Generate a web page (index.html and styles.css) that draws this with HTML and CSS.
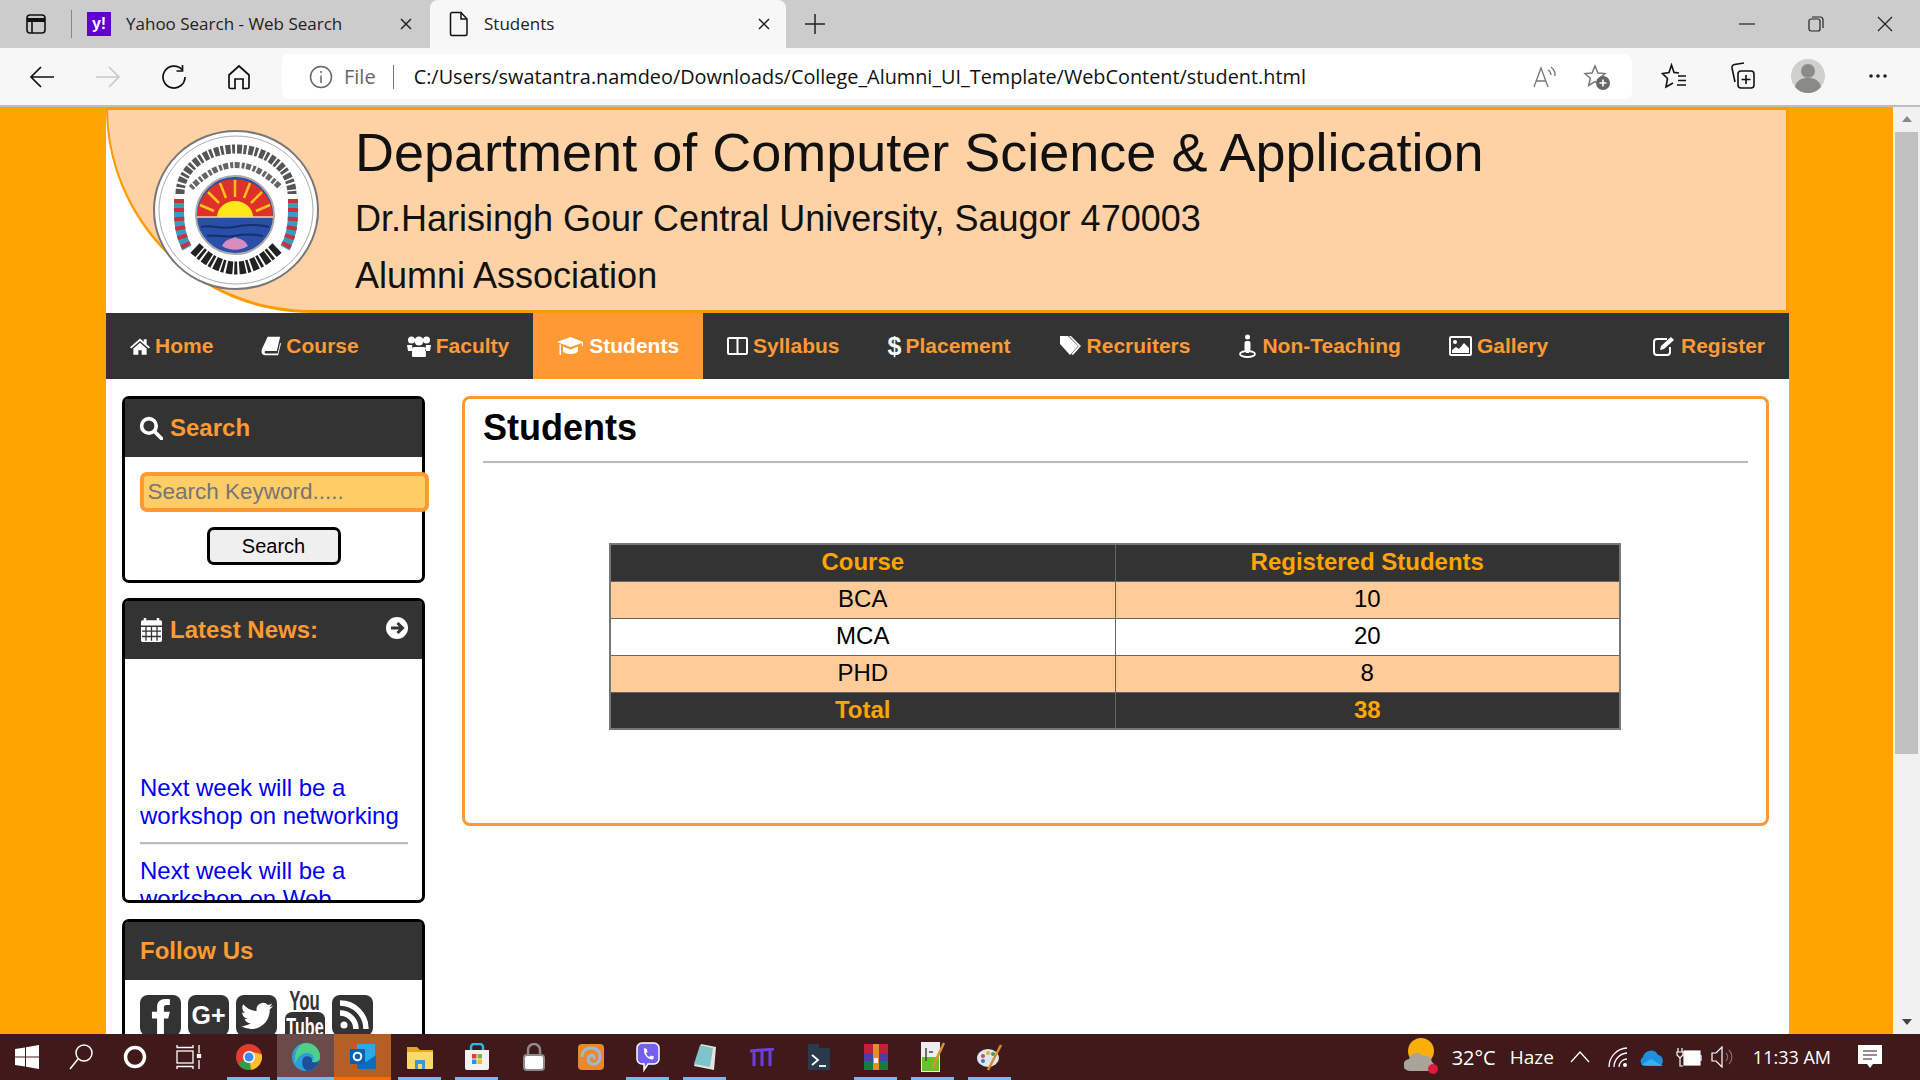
FILE: index.html
```html
<!DOCTYPE html>
<html lang="en">
<head>
    <meta charset="UTF-8">
    <title>Students</title>
    <link rel="stylesheet" href="styles.css">
</head>
<body>
    <!-- browser tabs -->
    <div class="tabbar">
        <svg class="tab-panel-icon" width="22" height="22" viewBox="0 0 22 22" fill="none" stroke="#111" stroke-width="1.6"><rect x="2" y="2" width="18" height="18" rx="3"/><path d="M2 7h18" stroke-width="4"/><path d="M7 8v12"/></svg>
        <div class="tab-sep"></div>
        <div class="tab">
            <div class="yahoo-icon">y!</div>
            <span class="tab-title">Yahoo Search - Web Search</span>
            <svg class="tab-close" width="14" height="14" viewBox="0 0 14 14" stroke="#222" stroke-width="1.5"><path d="M2 2l10 10M12 2L2 12"/></svg>
        </div>
        <div class="tab tab-active">
            <svg width="20" height="26" viewBox="0 0 20 26" fill="none" stroke="#111" stroke-width="1.5"><path d="M3 1.5h9l6 6.5v15a1.5 1.5 0 0 1-1.5 1.5h-13.500A1.500 1.500 0 0 1 1.500 23V3A1.500 1.500 0 0 1 3 1.500z"/><path d="M12 1.500V8h6"/></svg>
            <span class="tab-title">Students</span>
            <svg class="tab-close" width="14" height="14" viewBox="0 0 14 14" stroke="#222" stroke-width="1.5"><path d="M2 2l10 10M12 2L2 12"/></svg>
        </div>
        <svg class="tab-new" width="22" height="22" viewBox="0 0 22 22" stroke="#222" stroke-width="1.500"><path d="M11 1v20M1 11h20"/></svg>
        <div class="window-buttons">
            <svg width="16" height="16" viewBox="0 0 16 16" stroke="#222" stroke-width="1.200"><path d="M0 8h16"/></svg>
            <svg width="16" height="16" viewBox="0 0 16 16" fill="none" stroke="#222" stroke-width="1.200"><rect x="1" y="3" width="11" height="12" rx="2"/><path d="M4 1h8a3 3 0 0 1 3 3v8"/></svg>
            <svg width="16" height="16" viewBox="0 0 16 16" stroke="#222" stroke-width="1.200"><path d="M1 1l14 14M15 1L1 15"/></svg>
        </div>
    </div>

    <!-- address bar -->
    <div class="toolbar">
        <div class="nav-buttons">
            <svg width="26" height="24" viewBox="0 0 26 24" fill="none" stroke="#111" stroke-width="1.700"><path d="M25 12H2M12 2L2 12l10 10"/></svg>
            <svg width="26" height="24" viewBox="0 0 26 24" fill="none" stroke="#c9c9c9" stroke-width="1.700"><path d="M1 12h23M14 2l10 10-10 10"/></svg>
            <svg width="26" height="26" viewBox="0 0 26 26" fill="none" stroke="#111" stroke-width="1.700"><path d="M21 5.500A11 11 0 1 0 24 13"/><path d="M21.500 1v6h-6"/></svg>
            <svg width="24" height="26" viewBox="0 0 24 26" fill="none" stroke="#111" stroke-width="1.700"><path d="M2 11l10-9 10 9v12a1.500 1.500 0 0 1-1.500 1.500H16V15H8v9.500H3.500A1.500 1.500 0 0 1 2 23z"/></svg>
        </div>
        <div class="address">
            <svg width="24" height="24" viewBox="0 0 24 24" fill="none" stroke="#666" stroke-width="1.500"><circle cx="12" cy="12" r="10.500"/><path d="M12 10.500V18M12 6v2"/></svg>
            <span class="address-file">File</span>
            <span class="address-sep"></span>
            <span class="address-url">C:/Users/swatantra.namdeo/Downloads/College_Alumni_UI_Template/WebContent/student.html</span>
            <svg class="address-read" width="26" height="24" viewBox="0 0 26 24" fill="none" stroke="#777" stroke-width="1.300"><path d="M2 22L9 3l7 19M4.500 16h9"/><path d="M16 5a6 6 0 0 1 3 5M19 2a10 10 0 0 1 4 9"/></svg>
            <svg class="address-star" width="28" height="28" viewBox="0 0 28 28"><path d="M12 3l3 7 7 .6-5.300 4.700 1.600 7.200L12 18.700 5.700 22.500l1.600-7.200L2 10.600 9 10z" fill="none" stroke="#777" stroke-width="1.500"/><circle cx="20" cy="20" r="7" fill="#666"/><path d="M20 16.500v7M16.500 20h7" stroke="#fff" stroke-width="1.600"/></svg>
        </div>
        <div class="toolbar-right">
            <svg width="26" height="26" viewBox="0 0 26 26" fill="none" stroke="#111" stroke-width="1.600"><path d="M18 10l-5-.6L10.500 2 8 9.500 1.500 10.500l5 5L5 24l7-4"/><path d="M17 13h8M17 17.500h8M16 22h9"/></svg>
            <svg width="26" height="28" viewBox="0 0 26 28" fill="none" stroke="#111" stroke-width="1.600"><path d="M5 20L2 6a3 3 0 0 1 2.500-3.500L14 1"/><rect x="8" y="9" width="16" height="17" rx="3"/><path d="M16 13v9M11.500 17.500h9"/></svg>
            <svg width="34" height="34" viewBox="0 0 34 34"><circle cx="17" cy="17" r="17" fill="#cfcfcc"/><circle cx="17" cy="12" r="7" fill="#8c8a87"/><path d="M4 28c2-8 8-9 13-9s11 1 13 9a17 17 0 0 1-26 0z" fill="#8c8a87"/></svg>
            <svg width="20" height="6" viewBox="0 0 20 6" fill="#222"><circle cx="3" cy="3" r="1.800"/><circle cx="10" cy="3" r="1.800"/><circle cx="17" cy="3" r="1.800"/></svg>
        </div>
    </div>

    <!-- the page itself -->
    <div class="viewport">
        <div class="wrapper">
            <header class="site-header">
                <svg class="logo" viewBox="0 0 166 160">
                    <ellipse cx="83" cy="80" rx="82" ry="79" fill="#fff" stroke="#777" stroke-width="2"/>
                    <ellipse cx="83" cy="80" rx="77" ry="74" fill="none" stroke="#aaa" stroke-width="1"/>
                    <path d="M27 64A56 45 0 0 1 139 64" fill="none" stroke="#555" stroke-width="9" stroke-dasharray="5 1.500 3 2"/>
                    <path d="M38 58Q83 12 128 58" fill="none" stroke="#666" stroke-width="6" stroke-dasharray="3 1.500 5 2"/>
                    <path d="M42 118Q83 158 124 118" fill="none" stroke="#222" stroke-width="13" stroke-dasharray="6 1.500 3 2"/>
                    <path d="M26 69v14c0 14 3 26 8 35" fill="none" stroke="#3a9ac0" stroke-width="10"/>
                    <path d="M26 69v14c0 14 3 26 8 35" fill="none" stroke="#c8323c" stroke-width="10" stroke-dasharray="4 5"/>
                    <path d="M140 69v14c0 14-3 26-8 35" fill="none" stroke="#3a9ac0" stroke-width="10"/>
                    <path d="M140 69v14c0 14-3 26-8 35" fill="none" stroke="#c8323c" stroke-width="10" stroke-dasharray="4 5"/>
                    <circle cx="82" cy="85" r="39" fill="#2a4fa8" stroke="#aaa" stroke-width="2"/>
                    <path d="M44 87a38 38 0 0 1 76 0z" fill="#e0302a"/>
                    <path d="M64 87a18 16 0 0 1 36 0z" fill="#ffe81a"/>
                    <path d="M82 67V50M73 68l-6-15M91 68l6-15M66 73l-11-11M98 73l11-11M61 81l-14-6M103 81l14-6" stroke="#ffc21a" stroke-width="2.500"/>
                    <path d="M44 87h76" stroke="#f4d9a0" stroke-width="1.500"/>
                    <path d="M48 97c10-3 20 3 33 0s22-3 35 0M54 106c9-2 18 2 27 0s18-2 29 0" fill="none" stroke="#16306e" stroke-width="2"/>
                    <path d="M69 116c4-8 8-6 13-9 5 3 9 1 13 9-8 5-18 5-26 0z" fill="#d98ac0"/>
                </svg>
                <div class="site-title">
                    <h1>Department of Computer Science &amp; Application</h1>
                    <p>Dr.Harisingh Gour Central University, Saugor 470003</p>
                    <p>Alumni Association</p>
                </div>
            </header>

            <nav class="main-nav">
                <a class="nav-item">
                    <svg width="20" height="20" viewBox="0 0 24 24" fill="#fff"><path d="M12 3L0 13.500l1.500 1.500L12 6l10.500 9 1.500-1.500-4-3.500V4h-3.500v3zM4 15v7.500h6V17h4v5.500h6V15l-8-7z"/></svg>Home
                </a>
                <a class="nav-item">
                    <svg width="20" height="22" viewBox="0 0 24 24" fill="#fff"><path d="M8 1h15l-4 17H6c-2 0-2.500 3 0 3h14l3-13 1 1-3.500 14H5C1 23 0 20 1 16z"/></svg>Course
                </a>
                <a class="nav-item">
                    <svg width="24" height="24" viewBox="0 0 24 22" fill="#fff"><circle cx="4.500" cy="5" r="3.500"/><circle cx="19.500" cy="5" r="3.500"/><circle cx="12" cy="6" r="4.500"/><path d="M0 10h5l1 6H1zM24 10h-5l-1 6h5zM7 12h10c1.500 0 2 3 2 9a1 1 0 0 1-1 1H6a1 1 0 0 1-1-1c0-6 .5-9 2-9z"/></svg>Faculty
                </a>
                <a class="nav-item nav-active">
                    <svg width="27" height="24" viewBox="0 0 27 22" fill="#fff"><path d="M13.500 2L0 7l13.500 5L25 8v3l1 0V7z"/><path d="M6 11.500V16c0 1.500 3.500 3 7.500 3s7.500-1.500 7.500-3v-4.500l-7.500 3zM2.500 9v11h1.500V9.500z"/></svg>Students
                </a>
                <a class="nav-item">
                    <svg width="21" height="20" viewBox="0 0 21 20" fill="none" stroke="#fff" stroke-width="2"><rect x="1" y="2" width="19" height="16" rx="1"/><path d="M10.500 2v16"/></svg>Syllabus
                </a>
                <a class="nav-item">
                    <span class="dollar">$</span>Placement
                </a>
                <a class="nav-item">
                    <svg width="23" height="22" viewBox="0 0 23 22" fill="#fff"><path d="M1 1h8l10 10-8 9L1 9z"/><path d="M12 1l10 10-8 9-1.500-1 7-8L10 1z"/></svg>Recruiters
                </a>
                <a class="nav-item">
                    <svg width="19" height="24" viewBox="0 0 19 24" fill="#fff"><circle cx="9.500" cy="3" r="2.500"/><rect x="6.500" y="7" width="6" height="10" rx="2"/><rect x="8" y="15" width="3" height="4"/><ellipse cx="9.500" cy="20" rx="7.500" ry="3" fill="none" stroke="#fff" stroke-width="1.800"/></svg>Non-Teaching
                </a>
                <a class="nav-item">
                    <svg width="23" height="20" viewBox="0 0 23 20"><rect x="1" y="1" width="21" height="18" rx="1" fill="none" stroke="#fff" stroke-width="2"/><circle cx="6" cy="6" r="2" fill="#fff"/><path d="M3 17v-3l4-3 3 2 5-6 5 5v5z" fill="#fff"/></svg>Gallery
                </a>
                <a class="nav-item nav-right">
                    <svg width="23" height="20" viewBox="0 0 23 20"><path d="M14 3H4a3 3 0 0 0-3 3v10a3 3 0 0 0 3 3h10a3 3 0 0 0 3-3v-5" fill="none" stroke="#fff" stroke-width="2"/><path d="M8 10L18 1l3 3-10 9-4 1z" fill="#fff"/></svg>Register
                </a>
            </nav>

            <div class="content">
                <aside class="sidebar">
                    <section class="panel panel-search">
                        <h3 class="panel-head">
                            <svg class="search-icon" width="24" height="24" viewBox="0 0 23 23" fill="none" stroke="#fff" stroke-width="3.500"><circle cx="9.500" cy="9.500" r="7"/><path d="M15 15l6.500 6.500" stroke-linecap="round"/></svg>
                            Search
                        </h3>
                        <div class="search-body">
                            <input class="search-input" type="text" placeholder="Search Keyword.....">
                            <button class="search-button">Search</button>
                        </div>
                    </section>

                    <section class="panel panel-news">
                        <h3 class="panel-head">
                            <svg width="23" height="26" viewBox="0 0 23 24" preserveAspectRatio="none"><rect x="1" y="3" width="21" height="20" rx="1.500" fill="#fff"/><path d="M5 1v5M18 1v5" stroke="#fff" stroke-width="2.500"/><path d="M1 8.500h21M2 13h19M2 18h19M6 9v13M11.500 9v13M17 9v13" stroke="#333" stroke-width="1.300"/></svg>
                            Latest News:
                            <svg class="news-arrow" width="22" height="22" viewBox="0 0 22 22"><circle cx="11" cy="11" r="11" fill="#fff"/><path d="M5 11h11M11.500 6l5 5-5 5" fill="none" stroke="#333" stroke-width="3"/></svg>
                        </h3>
                        <div class="news-body">
                            <a class="news-link">Next week will be a workshop on networking</a>
                            <hr class="news-rule">
                            <a class="news-link">Next week will be a workshop on Web Technology</a>
                        </div>
                    </section>

                    <section class="panel panel-follow">
                        <h3 class="panel-head">Follow Us</h3>
                        <div class="social">
                            <div class="social-box"><svg width="44" height="44" viewBox="0 0 24 24" fill="#fff"><path d="M14 13.500h2.500l1-4H14v-2c0-1.030 0-2 2-2h1.500V2.140c-.326-.043-1.557-.14-2.857-.14C11.928 2 10 3.657 10 6.700v2.800H7v4h3V24h4z"/></svg></div>
                            <div class="social-box social-gplus">G+</div>
                            <div class="social-box"><svg width="32" height="32" viewBox="0 0 24 24" fill="#fff"><path d="M23.953 4.570a10 10 0 01-2.825.775 4.958 4.958 0 002.163-2.723c-.951.555-2.005.959-3.127 1.184a4.920 4.920 0 00-8.384 4.482C7.690 8.095 4.067 6.130 1.640 3.162a4.822 4.822 0 00-.666 2.475c0 1.710.870 3.213 2.188 4.096a4.904 4.904 0 01-2.228-.616v.060a4.923 4.923 0 003.946 4.827 4.996 4.996 0 01-2.212.085 4.936 4.936 0 004.604 3.417 9.867 9.867 0 01-6.102 2.105c-.390 0-.779-.023-1.170-.067a13.995 13.995 0 007.557 2.209c9.053 0 13.998-7.496 13.998-13.985 0-.210 0-.420-.015-.630A9.935 9.935 0 0024 4.590z"/></svg></div>
                            <div class="social-youtube">
                                <span class="yt-you">You</span>
                                <span class="yt-tube"><span class="yt-tube-text">Tube</span></span>
                            </div>
                            <div class="social-box"><svg width="40" height="40" viewBox="0 0 40 40" fill="none" stroke="#fff" stroke-width="5.500"><circle cx="11" cy="29" r="3.500" fill="#fff" stroke="none"/><path d="M7 17a16 16 0 0 1 16 16M7 7a26 26 0 0 1 26 26"/></svg></div>
                        </div>
                    </section>
                </aside>

                <main class="main-panel">
                    <h2 class="main-title">Students</h2>
                    <hr class="main-rule">
                    <table class="stats">
                        <thead>
                            <tr><th>Course</th><th>Registered Students</th></tr>
                        </thead>
                        <tbody>
                            <tr><td>BCA</td><td>10</td></tr>
                            <tr class="plain"><td>MCA</td><td>20</td></tr>
                            <tr><td>PHD</td><td>8</td></tr>
                        </tbody>
                        <tfoot>
                            <tr><th>Total</th><th>38</th></tr>
                        </tfoot>
                    </table>
                </main>
            </div>
        </div>

        <div class="scrollbar">
            <div class="scroll-up"></div>
            <div class="scroll-thumb"></div>
            <div class="scroll-down"></div>
        </div>
    </div>

    <!-- windows taskbar -->
    <div class="taskbar">
        <div class="tb-slot"><svg width="24" height="24" viewBox="0 0 24 24" fill="#fff"><path d="M0 4l10-1.500V11.500H0zM11 2.300L24 0v11.500H11zM0 12.500h10v9L0 20zM11 12.500h13V24l-13-2.200z"/></svg></div>
        <div class="tb-slot"><svg width="24" height="26" viewBox="0 0 24 26" fill="none" stroke="#fff" stroke-width="1.500"><circle cx="15" cy="9" r="8"/><path d="M9 15L1 25"/></svg></div>
        <div class="tb-slot"><svg width="24" height="24" viewBox="0 0 24 24" fill="none" stroke="#fff" stroke-width="3.500"><circle cx="12" cy="12" r="9.500"/></svg></div>
        <div class="tb-slot"><svg width="26" height="24" viewBox="0 0 26 24" fill="none" stroke="#fff" stroke-width="1.300"><path d="M1 0v2.500h16V0M1 24v-2.500h16V24"/><rect x="1" y="6" width="16" height="12"/><path d="M23 0v8M23 15v9"/><rect x="21.500" y="9.500" width="3" height="3" fill="#fff"/></svg></div>
        <div class="tb-app tb-first tb-open">
            <svg width="26" height="26" viewBox="0 0 26 26"><circle cx="13" cy="13" r="13" fill="#e33b2e"/><path d="M13 13L2 19.500A13 13 0 0 0 15 25.800z" fill="#2f9e44"/><path d="M13 13l2 12.800A13 13 0 0 0 25.800 10.500L13 7z" fill="#fbc02d"/><circle cx="13" cy="13" r="6" fill="#fff"/><circle cx="13" cy="13" r="4.500" fill="#4285f4"/></svg>
        </div>
        <div class="tb-app tb-open tb-hover">
            <svg width="28" height="28" viewBox="0 0 28 28"><circle cx="14" cy="14" r="14" fill="#2a9fd8"/><path d="M14 0a14 14 0 0 1 14 14c0 4-4 6-8 5 3-3 2-9-5-9-6 0-11 5-11 11C1 12 6 0 14 0z" fill="#4fd08a"/><path d="M12 14c4-2 9 0 8 5 3 1 6 0 7.500-2A14 14 0 0 1 16 28c-5-1-8-9-4-14z" fill="#1e4e9c"/></svg>
        </div>
        <div class="tb-app tb-open tb-active">
            <svg width="28" height="28" viewBox="0 0 28 28"><rect x="8" y="1" width="18" height="25" fill="#29a8ea"/><path d="M8 13l9 6 10-7v13a1 1 0 0 1-1 1H9a1 1 0 0 1-1-1z" fill="#0f6cbd"/><rect x="1" y="6" width="15" height="15" rx="1" fill="#0a5fb0"/><circle cx="8.500" cy="13.500" r="3.800" fill="none" stroke="#fff" stroke-width="2"/></svg>
        </div>
        <div class="tb-app tb-open">
            <svg width="26" height="24" viewBox="0 0 26 24"><path d="M0 2h10l3 3h13v4H0z" fill="#e2a91c"/><rect y="7" width="26" height="17" rx="1" fill="#ffd966"/><path d="M8 24v-9h10v9h-3v-5h-4v5z" fill="#3a96dd"/></svg>
        </div>
        <div class="tb-app tb-open">
            <svg width="26" height="28" viewBox="0 0 26 28"><path d="M7 8V4a3 3 0 0 1 3-3h6a3 3 0 0 1 3 3v4" fill="none" stroke="#29b6e8" stroke-width="2.500"/><path d="M1 7h24v18a2 2 0 0 1-2 2H3a2 2 0 0 1-2-2z" fill="#f2f2f2"/><rect x="8" y="11" width="4.500" height="4.500" fill="#e8412a"/><rect x="13.500" y="11" width="4.500" height="4.500" fill="#7cb82f"/><rect x="8" y="16.500" width="4.500" height="4.500" fill="#1e9be0"/><rect x="13.500" y="16.500" width="4.500" height="4.500" fill="#fbbc09"/></svg>
        </div>
        <div class="tb-app">
            <svg width="22" height="28" viewBox="0 0 22 28"><path d="M5 13V7a6 6 0 0 1 12 0v6" fill="none" stroke="#8e8a88" stroke-width="2.500"/><rect x="1" y="12" width="20" height="15" rx="3" fill="#fff" stroke="#8e8a88" stroke-width="2"/></svg>
        </div>
        <div class="tb-app">
            <svg width="26" height="26" viewBox="0 0 26 26"><rect width="26" height="26" rx="4" fill="#e8892c"/><path d="M13 4c6 0 9 4 9 9s-4 8-8 7-5-6-2-8 5 1 4 3M13 4C7 4 4 8 4 13" fill="none" stroke="#9db8d8" stroke-width="3"/></svg>
        </div>
        <div class="tb-app tb-open">
            <svg width="24" height="30" viewBox="0 0 24 30"><path d="M6 1h12a5 5 0 0 1 5 5v11a5 5 0 0 1-5 5h-6l-4 6v-6H6a5 5 0 0 1-5-5V6a5 5 0 0 1 5-5z" fill="#7360f2" stroke="#fff" stroke-width="1.500"/><path d="M8 6l3 1 .5 3-1.500 1c.5 2 1.500 3 3.500 4l1.500-1.500 3 1-1 3c-4 .5-9-4-9-9z" fill="#fff"/></svg>
        </div>
        <div class="tb-app tb-open">
            <svg width="24" height="28" viewBox="0 0 24 28"><path d="M8 1l15 3-2 23-20-4z" fill="#e8e4d8"/><path d="M7 2l13 3-3 19-16-3z" fill="#7fc4cc"/></svg>
        </div>
        <div class="tb-app">
            <svg width="24" height="18" viewBox="0 0 24 18" fill="none" stroke="#6d3fe0" stroke-width="3"><path d="M0 3l24-2M4 3v15M12 3v15M20 2v16"/></svg>
        </div>
        <div class="tb-app">
            <svg width="22" height="26" viewBox="0 0 22 26"><path d="M0 0h11v4h11v22H0z" fill="#2b3a4a"/><path d="M4 11l6 5-6 5" fill="none" stroke="#fff" stroke-width="1.800"/><path d="M11 22h7" stroke="#fff" stroke-width="1.800"/></svg>
        </div>
        <div class="tb-app tb-open">
            <svg width="24" height="26" viewBox="0 0 24 26"><rect width="24" height="9" fill="#c02040"/><rect y="9" width="24" height="8" fill="#4a40a8"/><rect y="17" width="24" height="9" fill="#1e7a3c"/><rect x="9" width="6" height="26" fill="#e09028"/><rect x="10" y="14" width="4" height="5" fill="#eee"/></svg>
        </div>
        <div class="tb-app tb-open">
            <svg width="24" height="30" viewBox="0 0 24 30"><path d="M0 0h19v30H0z" fill="#eee"/><path d="M1 15h17v14H1z" fill="#66c22a"/><path d="M5 6v13M8 10h4" stroke="#444" stroke-width="1.500"/><path d="M23 1L13 22l-1 4" stroke="#d9952a" stroke-width="2.500" fill="none"/></svg>
        </div>
        <div class="tb-app tb-open">
            <svg width="26" height="28" viewBox="0 0 26 28"><ellipse cx="11" cy="15" rx="11" ry="9" fill="#dce8f0"/><circle cx="6" cy="13" r="2" fill="#d04a4a"/><circle cx="11" cy="10" r="2" fill="#e0b020"/><circle cx="16" cy="11" r="2" fill="#4a9a5a"/><circle cx="6" cy="18" r="2" fill="#4a70c0"/><path d="M24 2L11 27" stroke="#d98a2a" stroke-width="2.500"/></svg>
        </div>

        <div class="tray">
            <svg class="tray-weather" width="34" height="38" viewBox="0 0 34 38"><circle cx="17" cy="13" r="13" fill="#f9ae0a"/><path d="M6 33a6 6 0 0 1-1-12 8 8 0 0 1 14-3 7 7 0 0 1 9 6 5 5 0 0 1-1 9z" fill="#a9a39a"/><circle cx="29" cy="31" r="5" fill="#e01a3c"/></svg>
            <span class="tray-temp">32°C</span>
            <span class="tray-haze">Haze</span>
            <svg class="tray-chevron" width="20" height="12" viewBox="0 0 20 12" fill="none" stroke="#fff" stroke-width="1.300"><path d="M1 11l9-10 9 10"/></svg>
            <svg class="tray-wifi" width="20" height="22" viewBox="0 0 20 22" fill="none" stroke="#fff" stroke-width="1.300"><path d="M1 21A19 19 0 0 1 19 2M6 21A14 14 0 0 1 19 7M11 21a8 8 0 0 1 8-8"/><circle cx="17" cy="19" r="2" fill="#fff" stroke="none"/></svg>
            <svg class="tray-cloud" width="26" height="18" viewBox="0 0 26 18"><path d="M5 18a5 5 0 0 1-1-9 8 8 0 0 1 15-2 6 6 0 0 1 2 11z" fill="#1f8fe0"/><path d="M2 17l10-6 12 7z" fill="#35b0f0"/></svg>
            <svg class="tray-battery" width="26" height="20" viewBox="0 0 26 20" fill="none" stroke="#fff" stroke-width="1.200"><path d="M2 1v4M6 1v4M1 5h6v3l-3 3-3-3zM4 11v8h3"/><rect x="8" y="4" width="16" height="14" fill="#fff"/><path d="M25 8v6"/></svg>
            <svg class="tray-volume" width="24" height="22" viewBox="0 0 24 22" fill="none" stroke="#fff" stroke-width="1.200"><path d="M1 7h4l6-6v20l-6-6H1z"/><path d="M15 7a6 6 0 0 1 0 8M18 4a10 10 0 0 1 0 14" stroke="#8a7070"/></svg>
            <span class="tray-clock">11:33 AM</span>
            <svg class="tray-notify" width="24" height="24" viewBox="0 0 24 24"><path d="M0 0h24v19h-9l-3 4-3-4H0z" fill="#fff"/><path d="M5 6h14M5 10h14M5 14h9" stroke="#401a1a" stroke-width="1.200"/></svg>
        </div>
    </div>
</body>
</html>
```

FILE: styles.css
```css
* {
    margin: 0;
    padding: 0;
    box-sizing: border-box;
}

body {
    font-family: 'Liberation Sans', Arial, sans-serif;
    width: 1920px;
    height: 1080px;
    overflow: hidden;
    display: flex;
    flex-direction: column;
    background: #ffa500;
}

/* browser chrome */
.tabbar {
    height: 48px;
    flex: none;
    background: #cccccc;
    display: flex;
    align-items: center;
    font-family: 'Open Sans', sans-serif;
    font-size: 17px;
    color: #222;
}

.tab-panel-icon {
    margin-left: 25px;
}

.tab-sep {
    width: 1px;
    height: 28px;
    background: #888;
    margin-left: 24px;
}

.tab {
    height: 48px;
    display: flex;
    align-items: center;
    gap: 15px;
    width: 358px;
    padding: 0 17px 0 15px;
}

.tab-active {
    width: 356px;
    background: #f7f7f7;
    border-radius: 8px 8px 0 0;
    padding-left: 19px;
    padding-right: 15px;
}

.tab-title {
    flex: 1;
    white-space: nowrap;
    margin-top: -2px;
}

.yahoo-icon {
    width: 24px;
    height: 24px;
    background: #6001d2;
    color: #fff;
    font-family: 'Liberation Sans', sans-serif;
    font-weight: bold;
    font-size: 16px;
    line-height: 24px;
    text-align: center;
}

.tab-new {
    margin-left: 18px;
}

.window-buttons {
    margin-left: auto;
    margin-right: 27px;
    display: flex;
    gap: 53px;
}

.toolbar {
    height: 59px;
    flex: none;
    background: #f7f7f7;
    border-bottom: 2px solid #bdbdbd;
    display: flex;
    align-items: center;
    font-family: 'Open Sans', sans-serif;
}

.nav-buttons {
    width: 282px;
    padding-left: 29px;
    display: flex;
    align-items: center;
    gap: 40px;
}

.address {
    width: 1350px;
    height: 45px;
    background: #fff;
    border-radius: 7px;
    display: flex;
    align-items: center;
    padding-left: 27px;
    font-size: 20px;
    white-space: nowrap;
}

.address-file {
    color: #666;
    margin-left: 11px;
}

.address-sep {
    width: 1px;
    height: 24px;
    background: #777;
    margin: 0 20px 0 17px;
}

.address-url {
    color: #111;
    font-size: 19.85px;
}

.address-read {
    margin-left: auto;
}

.address-star {
    margin: 0 21px 0 25px;
}

.toolbar-right {
    flex: 1;
    display: flex;
    align-items: center;
    gap: 43px;
    padding-left: 29px;
    margin-top: -2px;
}

.toolbar-right svg:nth-child(2) {
    margin-right: -8px;
}

/* page */
.viewport {
    height: 927px;
    flex: none;
    display: flex;
    overflow: hidden;
    background: #ffa500;
}

.wrapper {
    width: 1683px;
    margin-left: 106px;
    background: #fff;
}

.site-header {
    height: 206px;
    background: #ffd2a6;
    border: 3px solid #ff9900;
    border-left-width: 2px;
    border-radius: 0 0 0 205px;
    display: flex;
    align-items: center;
}

.logo {
    width: 166px;
    height: 160px;
    margin-left: 45px;
    margin-right: 36px;
    flex: none;
}

.site-title {
    align-self: flex-start;
    color: #111;
}

.site-title h1 {
    font-weight: normal;
    font-size: 54px;
    line-height: 62px;
    margin-top: 11px;
    margin-bottom: 7px;
    white-space: nowrap;
}

.site-title p {
    font-size: 36px;
    line-height: 58px;
}

.site-title p + p {
    margin-top: -1px;
}

.main-nav {
    height: 66px;
    background: #333;
    display: flex;
}

.nav-item {
    display: flex;
    align-items: center;
    gap: 5px;
    padding: 0 24px;
    font-size: 21px;
    font-weight: bold;
    color: #ff9933;
}

.nav-active {
    background: #ff9933;
    color: #fff;
}

.nav-right {
    margin-left: auto;
}

.dollar {
    color: #fff;
    width: 13px;
    font-size: 25px;
}

.content {
    display: flex;
    padding: 17px 20px 0 16px;
    gap: 37px;
    align-items: flex-start;
}

.sidebar {
    width: 303px;
    flex: none;
}

.panel {
    border: 3px solid #000;
    border-radius: 7px;
    margin-bottom: 16px;
    background: #fff;
}

.panel-head {
    height: 58px;
    background: #333;
    color: #ff9933;
    font-size: 24px;
    display: flex;
    align-items: center;
    gap: 7px;
    padding-left: 15px;
    border-radius: 3px 3px 0 0;
}

.panel-search {
    height: 187px;
    margin-bottom: 15px;
}

.search-icon {
    margin-left: -1px;
}

.search-body {
    display: flex;
    flex-direction: column;
    align-items: center;
}

.search-input {
    width: 289px;
    height: 40px;
    margin: 15px 0 15px 21px;
    background: #ffcc66;
    border: 4px solid #ff9933;
    border-radius: 7px;
    padding: 0 4px;
    font-family: 'Liberation Sans', sans-serif;
    font-size: 22.5px;
    outline: none;
}

.search-input::placeholder {
    color: #757575;
}

.search-button {
    width: 134px;
    height: 38px;
    background: #efefef;
    border: 3px solid #000;
    border-radius: 7px;
    font-family: 'Liberation Sans', sans-serif;
    font-size: 20px;
    color: #000;
}

.panel-news {
    height: 305px;
}

.news-arrow {
    margin-left: auto;
    margin-right: 14px;
    margin-top: -5px;
}

.news-body {
    height: 241px;
    overflow: hidden;
    padding: 115px 14px 0 15px;
}

.news-link {
    display: block;
    color: #0000ee;
    font-size: 24px;
    line-height: 28px;
}

.news-rule {
    margin: 12px 0;
    border: none;
    border-top: 2px solid #bbb;
    border-bottom: 1px solid #eee;
}

.panel-follow {
    height: 200px;
}

.social {
    display: flex;
    gap: 7px;
    padding: 15px 0 0 15px;
}

.social-box {
    width: 41px;
    height: 41px;
    background: #333;
    border-radius: 8px;
    display: flex;
    align-items: center;
    justify-content: center;
    flex: none;
    overflow: hidden;
}

.social-gplus {
    color: #fff;
    font-weight: bold;
    font-size: 25px;
}

.social-youtube {
    width: 41px;
    height: 70px;
    margin-top: -4px;
    display: flex;
    flex-direction: column;
    align-items: center;
    font-weight: bold;
}

.yt-you {
    font-size: 27px;
    line-height: 21px;
    color: #333;
    transform: scaleX(0.62);
}

.yt-tube {
    width: 40px;
    height: 40px;
    background: #333;
    color: #fff;
    border-radius: 7px;
    overflow: hidden;
}

.yt-tube-text {
    display: block;
    width: 64px;
    margin-left: -12px;
    text-align: center;
    font-size: 26px;
    line-height: 30px;
    transform: scaleX(0.62);
}

.main-panel {
    flex: 1;
    height: 430px;
    border: 3px solid #ff9933;
    border-radius: 8px;
    padding: 0 18px;
}

.main-title {
    font-size: 36px;
    line-height: 58px;
    color: #000;
}

.main-rule {
    margin-top: 4px;
    border: none;
    border-top: 2px solid #bbb;
}

.stats {
    width: 1012px;
    margin: 80px 0 0 126px;
    border-collapse: collapse;
    border: 2px solid #777;
    font-size: 24px;
    text-align: center;
    table-layout: fixed;
}

.stats th,
.stats td {
    height: 37px;
    padding: 0 0 2px;
    border: 1px solid #666;
}

.stats tfoot th {
    padding: 0;
}

.stats th {
    background: #333;
    color: #ffa500;
}

.stats tbody tr {
    background: #ffcc99;
}

.stats tbody tr.plain {
    background: #fff;
}

.scrollbar {
    width: 27px;
    margin-left: auto;
    background: #f1f1f1;
    display: flex;
    flex-direction: column;
    align-items: center;
}

.scroll-up,
.scroll-down {
    width: 0;
    height: 0;
    border-left: 5px solid transparent;
    border-right: 5px solid transparent;
}

.scroll-up {
    border-bottom: 6px solid #888;
    margin-top: 9px;
}

.scroll-thumb {
    width: 23px;
    height: 622px;
    background: #c1c1c1;
    margin-top: 10px;
}

.scroll-down {
    border-top: 6px solid #444;
    margin-top: auto;
    margin-bottom: 9px;
}

/* windows taskbar */
.taskbar {
    height: 46px;
    flex: none;
    background: #401a1a;
    display: flex;
    align-items: center;
    color: #fff;
    font-family: 'Open Sans', sans-serif;
    font-size: 20px;
}

.tb-slot {
    width: 54px;
    height: 46px;
    display: flex;
    align-items: center;
    justify-content: center;
}

.tb-app {
    width: 57px;
    height: 46px;
    display: flex;
    align-items: center;
    justify-content: center;
    position: relative;
}

.tb-first {
    margin-left: 4px;
}

.tb-open::after {
    content: '';
    position: absolute;
    left: 7px;
    right: 7px;
    bottom: 0;
    height: 3px;
    background: #76b9ed;
}

.tb-hover {
    background: #6b4a4a;
}

.tb-hover::after {
    left: 0;
    right: 0;
}

.tb-active {
    background: #b55f24;
}

.tb-active::after {
    left: 0;
    right: 0;
    background: #ff6a00;
}

.tray {
    margin-left: auto;
    display: flex;
    align-items: center;
    white-space: nowrap;
}

.tray-weather {
    margin-right: 14px;
}

.tray-haze {
    margin-left: 14px;
    font-size: 19px;
}

.tray-chevron {
    margin-left: 16px;
}

.tray-wifi {
    margin-left: 18px;
}

.tray-cloud {
    margin-left: 11px;
}

.tray-battery {
    margin-left: 11px;
}

.tray-volume {
    margin-left: 9px;
}

.tray-clock {
    margin-left: 18px;
    font-size: 18px;
}

.tray-notify {
    margin: 0 38px 0 27px;
}
```
